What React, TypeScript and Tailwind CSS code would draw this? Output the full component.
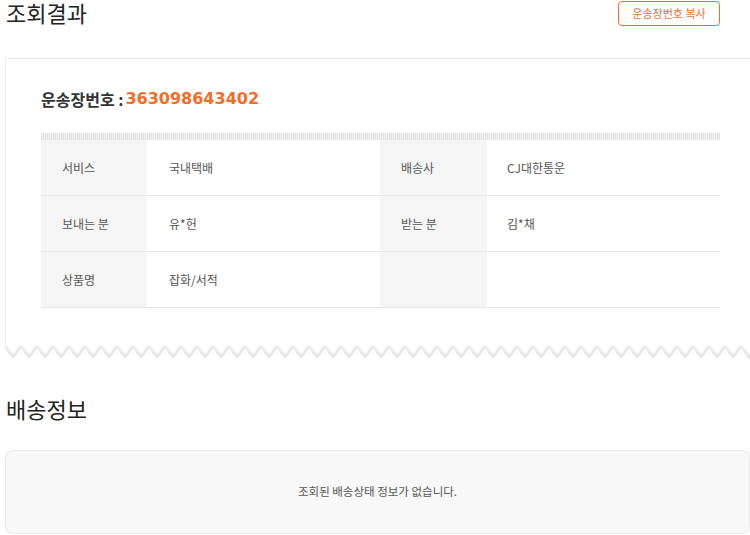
import React from 'react';

const rows = [
  { l1: '서비스', v1: '국내택배', l2: '배송사', v2: 'CJ대한통운' },
  { l1: '보내는 분', v1: '유*헌', l2: '받는 분', v2: '김*채' },
  { l1: '상품명', v1: '잡화/서적', l2: '', v2: '' },
];

const ZigZag: React.FC = () => (
  <svg width="751" height="16" className="block" aria-hidden>
    <defs>
      <pattern id="zz" x="0" y="0" width="16" height="16" patternUnits="userSpaceOnUse">
        <polyline points="0,2 8,13 16,2" fill="none" stroke="#e8e8e8" strokeWidth="3" />
      </pattern>
    </defs>
    <rect x="0" y="0" width="751" height="16" fill="url(#zz)" />
  </svg>
);

const App: React.FC = () => {
  return (
    <div
      className="w-[750px] h-[535px] overflow-hidden bg-white text-[#222]"
      style={{ fontFamily: '"Noto Sans CJK KR", "Noto Sans", sans-serif' }}
    >
      {/* 조회결과 헤더 */}
      <div className="h-[58px] flex justify-between items-start pl-[6px] pr-[30px]">
        <h1 className="text-[22px] leading-[24px] font-normal text-[#222]">조회결과</h1>
        <button className="mt-[1px] w-[102px] h-[25px] rounded-[4px] border border-[#f26d2a] text-[11px] text-[#f26d2a] bg-white">
          운송장번호 복사
        </button>
      </div>

      {/* 운송장 카드 */}
      <div className="ml-[5px] w-[751px]">
        <div className="border-t border-x border-[#ebebeb] px-[35px] pt-[29px] pb-[36px]">
          <p className="h-[22px] leading-[22px] mb-[23px] flex items-center">
            <span className="text-[16px] font-bold text-[#333]">운송장번호 :</span>
            <span
              className="ml-[2px] text-[16px] font-bold text-[#f26d2a]"
              style={{ fontFamily: '"DejaVu Sans", sans-serif' }}
            >
              363098643402
            </span>
          </p>
          <div className="h-[7px] bg-[repeating-linear-gradient(90deg,#e2e2e2_0_1px,#f1f1f1_1px_2px)]" />
          <div className="text-[12px] text-[#555]">
            {rows.map((r, i) => (
              <div key={i} className="grid grid-cols-[106px_233px_107px_1fr] h-[56px] border-b border-[#e8e8e8]">
                <div className="bg-[#f5f5f5] flex items-center pl-[21px]">{r.l1}</div>
                <div className="flex items-center pl-[22px]">{r.v1}</div>
                <div className="bg-[#f5f5f5] flex items-center pl-[21px]">{r.l2}</div>
                <div className="flex items-center pl-[20px]">{r.v2}</div>
              </div>
            ))}
          </div>
        </div>
        <ZigZag />
      </div>

      {/* 배송정보 */}
      <h2 className="mt-[36px] pl-[6px] text-[22px] leading-[25px] font-normal text-[#222]">배송정보</h2>
      <div className="mt-[29px] ml-[5px] w-[745px] h-[84px] rounded-[8px] border border-[#e8e8e8] bg-[#f8f8f8] flex items-center justify-center">
        <p className="text-[11.5px] text-[#555]">조회된 배송상태 정보가 없습니다.</p>
      </div>
    </div>
  );
};

export default App;
